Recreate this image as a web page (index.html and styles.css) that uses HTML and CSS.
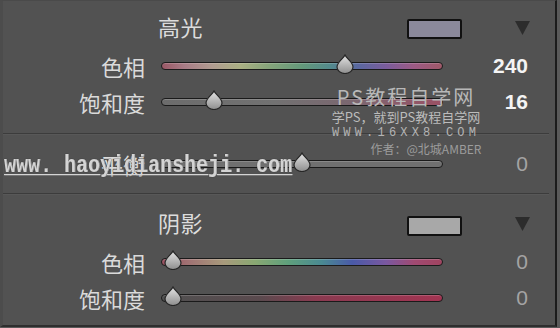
FILE: index.html
```html
<!DOCTYPE html>
<html lang="zh">
<head>
<meta charset="utf-8">
<link rel="stylesheet" href="styles.css">
</head>
<body>
<div class="frame">
  <div class="panel">
    <section class="group group-hl">
      <div class="head">
        <span class="title">高光</span>
        <span class="swatch swatch-hl"></span>
        <svg class="tri" width="15" height="14" viewBox="0 0 15 14"><polygon points="0,0 15,0 7.5,14"/></svg>
      </div>
      <div class="row">
        <span class="label">色相</span>
        <div class="track hue">
          <svg class="thumb" style="--p:0.667" width="18" height="20" viewBox="0 0 18 20"><defs><linearGradient id="tg1" x1="0" y1="0" x2="0" y2="1"><stop offset="0" stop-color="#e4e4e4"/><stop offset="1" stop-color="#8e8e8e"/></linearGradient></defs><path d="M9 1 C11 5 17 8 17 13 A8 6.5 0 0 1 1 13 C1 8 7 5 9 1Z" fill="url(#tg1)" stroke="#262626" stroke-width="1.2"/></svg>
        </div>
        <span class="value strong">240</span>
      </div>
      <div class="row">
        <span class="label">饱和度</span>
        <div class="track sat-hl">
          <svg class="thumb" style="--p:0.16" width="18" height="20" viewBox="0 0 18 20"><path d="M9 1 C11 5 17 8 17 13 A8 6.5 0 0 1 1 13 C1 8 7 5 9 1Z" fill="url(#tg1)" stroke="#262626" stroke-width="1.2"/></svg>
        </div>
        <span class="value strong">16</span>
      </div>
    </section>
    <div class="divider"></div>
    <section class="group group-bal">
      <div class="row">
        <span class="label">平衡</span>
        <div class="track bal">
          <svg class="thumb" style="--p:0.5" width="18" height="20" viewBox="0 0 18 20"><path d="M9 1 C11 5 17 8 17 13 A8 6.5 0 0 1 1 13 C1 8 7 5 9 1Z" fill="url(#tg1)" stroke="#262626" stroke-width="1.2"/></svg>
        </div>
        <span class="value dim">0</span>
      </div>
    </section>
    <div class="divider"></div>
    <section class="group group-sh">
      <div class="head">
        <span class="title">阴影</span>
        <span class="swatch swatch-sh"></span>
        <svg class="tri" width="15" height="14" viewBox="0 0 15 14"><polygon points="0,0 15,0 7.5,14"/></svg>
      </div>
      <div class="row">
        <span class="label">色相</span>
        <div class="track hue hue-sh">
          <svg class="thumb" style="--p:0" width="18" height="20" viewBox="0 0 18 20"><path d="M9 1 C11 5 17 8 17 13 A8 6.5 0 0 1 1 13 C1 8 7 5 9 1Z" fill="url(#tg1)" stroke="#262626" stroke-width="1.2"/></svg>
        </div>
        <span class="value dim">0</span>
      </div>
      <div class="row">
        <span class="label">饱和度</span>
        <div class="track sat-sh">
          <svg class="thumb" style="--p:0" width="18" height="20" viewBox="0 0 18 20"><path d="M9 1 C11 5 17 8 17 13 A8 6.5 0 0 1 1 13 C1 8 7 5 9 1Z" fill="url(#tg1)" stroke="#262626" stroke-width="1.2"/></svg>
        </div>
        <span class="value dim">0</span>
      </div>
    </section>
  </div>
  <div class="wm wm-ps">
    <div class="wm-l1">PS教程自学网</div>
    <div class="wm-l2">学PS，就到PS教程自学网</div>
    <div class="wm-l3">WWW.16XX8.COM</div>
    <div class="wm-l4">作者：@北城AMBER</div>
  </div>
  <div class="wm wm-url">www. haoyidiansheji. com</div>
</div>
</body>
</html>
```

FILE: styles.css
```css
html, body {
  margin: 0;
  padding: 0;
  background: #5a5a5a;
}
.frame {
  position: relative;
  width: 560px;
  height: 328px;
  overflow: hidden;
  background: #5a5a5a;
  font-family: "Noto Sans CJK SC", "Noto Sans", sans-serif;
}
.panel {
  width: 557px;
  height: 327px;
  box-sizing: border-box;
  background: #525252;
  border-right: 2px solid #1c1c1c;
  border-bottom: 2px solid #2e2e2e;
  border-left: 3px solid #4c4c4c;
  border-top: 1px solid #4a4a4a;
  display: flex;
  flex-direction: column;
}
.group-hl { padding: 7px 0 13px; }
.group-bal { padding: 12px 0 11px; }
.group-sh { padding: 10px 0 7px; }
.divider {
  height: 1px;
  background: #3c3c3c;
  margin: 0 6px 0 0;
  box-shadow: 0 1px 0 #585858;
}
.head {
  display: flex;
  align-items: center;
  height: 40px;
  padding-left: 155px;
}
.title {
  width: 249px;
  font-size: 22px;
  line-height: 24px;
  color: #dcdcdc;
  letter-spacing: 0.5px;
  margin-bottom: 4px;
}
.swatch {
  width: 55px;
  height: 20px;
  box-sizing: border-box;
  border: 2px solid #111;
  border-radius: 2px;
}
.swatch-hl { background: #8b899b; margin-top: 2px; }
.swatch-sh { background: #a8a8a8; margin-top: 4px; }
.tri {
  margin-left: 53px;
  fill: #2c2c2c;
}
.row {
  display: grid;
  grid-template-columns: 142px 282px 69px;
  column-gap: 16px;
  align-items: center;
  height: 36px;
}
.label {
  text-align: right;
  font-size: 22px;
  line-height: 24px;
  color: #dadada;
}
.track {
  position: relative;
  height: 8px;
  box-sizing: border-box;
  border: 1.5px solid #1a1a1a;
  border-radius: 4px;
  box-shadow: inset 0 1px 0 rgba(255,255,255,0.18);
}
.hue {
  background: linear-gradient(to right,
    #9a5866 0%, #a87c86 8%, #b09c90 18%, #aab083 28%, #86a47a 38%,
    #63987a 50%, #538a8c 60%, #5a68a0 70%, #7a5c9c 80%, #9c5a84 90%, #a05868 100%);
}
.hue-sh {
  background: linear-gradient(to right,
    #9a5060 0%, #a07474 10%, #a89a7c 22%, #8aa872 33%, #5fa07c 45%,
    #4a8a92 57%, #4a5aa8 68%, #7a58a0 80%, #a04a72 90%, #a04460 100%);
}
.sat-hl {
  background: linear-gradient(to right, #6c6c6c 0%, #727272 40%, #7c6670 70%, #9a5064 100%);
}
.sat-sh {
  background: linear-gradient(to right, #505050 0%, #5a4a4e 35%, #8a3a50 55%, #a23452 100%);
}
.bal {
  background: #707070;
}
.thumb {
  position: absolute;
  top: -9px;
  left: calc(11px + var(--p) * (100% - 22px) - 9px);
}
.value {
  text-align: right;
  font-family: "Liberation Sans", Arial, sans-serif;
  font-size: 21px;
  line-height: 24px;
}
.strong {
  font-weight: bold;
  color: #f4f4f4;
}
.dim {
  color: #a4a4a4;
}
.wm {
  position: absolute;
  pointer-events: none;
}
.wm-ps {
  left: 326px;
  top: 86px;
  width: 160px;
  text-align: center;
  color: #b4b4b4;
}
.wm-l1 {
  font-size: 20px;
  line-height: 22px;
  letter-spacing: 2px;
  color: #b8b8b8;
}
.wm-l2 {
  font-size: 13px;
  line-height: 17px;
  color: #bcbcbc;
}
.wm-l3 {
  font-family: "Liberation Mono", monospace;
  font-size: 12px;
  line-height: 16px;
  letter-spacing: 4.2px;
  color: #b4b4b4;
}
.wm-l4 {
  font-size: 12px;
  line-height: 16px;
  padding-left: 40px;
  color: #9c9c9c;
}
.wm-url {
  left: 4px;
  top: 156px;
  font-family: "Liberation Mono", monospace;
  font-weight: bold;
  font-size: 20px;
  line-height: 24px;
  color: #d4d4d4;
  text-decoration: underline;
  text-decoration-thickness: 1px;
  text-underline-offset: 2px;
  text-shadow: 0 0 1px #222, 0.5px 0 0 #d4d4d4;
  transform: scaleY(1.2);
  transform-origin: 0 100%;
}
```
